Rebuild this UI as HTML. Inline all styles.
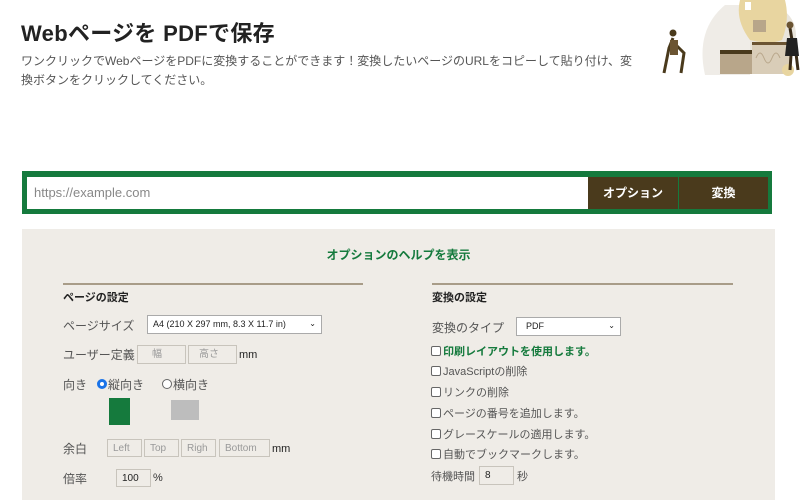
<!DOCTYPE html>
<html><head><meta charset="utf-8"><style>
*{margin:0;padding:0;box-sizing:border-box}
body{width:802px;height:500px;background:#fff;font-family:"Liberation Sans","Noto Sans CJK JP",sans-serif;position:relative;overflow:hidden;color:#333}
.a{position:absolute;white-space:nowrap}
.inp{position:absolute;border:1px solid #c8c4bc;background:#efece7;font-size:10px;color:#999;padding-left:5px;line-height:17px}
.lab{font-size:12px;color:#555}
.cb{display:inline-block;width:10px;height:10px;border:1px solid #666;border-radius:2px;background:#fff;vertical-align:-1px;margin-right:2px}
</style></head><body>
<div class="a" style="left:21px;top:16px;font-size:22px;font-weight:bold;color:#222;letter-spacing:0.3px">Webページを PDFで保存</div>
<div class="a" style="left:21px;top:52px;font-size:12px;color:#555;line-height:19px">ワンクリックでWebページをPDFに変換することができます！変換したいページのURLをコピーして貼り付け、変<br>換ボタンをクリックしてください。</div>
<svg class="a" style="left:640px;top:0" width="162" height="80">
<path d="M95 8 Q120 -2 140 8 Q160 20 155 45 Q150 75 115 74 L70 74 Q55 40 95 8Z" fill="#e9e5dc"/>
<path d="M65 75 Q55 30 85 5 L110 5 L110 75Z" fill="#efece7"/>
<path d="M100 0 L145 0 Q150 20 142 40 Q130 45 110 40 Q95 20 100 0Z" fill="#e8d5a0"/>
<rect x="105" y="2" width="6" height="8" fill="#fff"/>
<rect x="113" y="20" width="13" height="12" fill="#b8a68a"/>
<rect x="80" y="52" width="32" height="22" fill="#b8a68a"/>
<rect x="80" y="50" width="32" height="4" fill="#4a3a1c"/>
<rect x="112" y="42" width="38" height="32" fill="#d9cdb8"/>
<rect x="112" y="42" width="38" height="3" fill="#6b5432"/>
<path d="M116 58 q4 -10 8 0 t8 0 t8 0" stroke="#b8a68a" fill="none"/>
<circle cx="148" cy="70" r="6" fill="#e8d5a0"/>
<path d="M33 38 l-4 10 l-5 25 M36 45 l8 8 l-3 20" stroke="#4a3a1c" stroke-width="3" fill="none"/>
<path d="M30 40 l8 0 l0 15 l-8 0z" fill="#6b5432"/>
<circle cx="33" cy="33" r="3.5" fill="#4a3a1c"/>
<path d="M150 28 l2 12 l-2 30 M155 45 l3 25" stroke="#3a2c18" stroke-width="3" fill="none"/>
<path d="M147 38 l10 0 l2 18 l-14 0z" fill="#222"/>
<circle cx="150" cy="25" r="3.5" fill="#6b5432"/>
</svg>
<div class="a" style="left:22px;top:171px;width:750px;height:43px;background:#157a3d"></div>
<div class="a" style="left:27px;top:177px;width:561px;height:32px;background:#fff;font-size:13px;color:#888;padding:8px 7px">https://example.com</div>
<div class="a" style="left:588px;top:177px;width:90px;height:32px;background:#4a3a1c;color:#fff;font-size:12px;font-weight:bold;text-align:center;line-height:32px">オプション</div>
<div class="a" style="left:679px;top:177px;width:89px;height:32px;background:#4a3a1c;color:#fff;font-size:12px;font-weight:bold;text-align:center;line-height:32px">変換</div>
<div class="a" style="left:22px;top:229px;width:753px;height:271px;background:#efece7"></div>
<div class="a" style="left:22px;top:246px;width:753px;text-align:center;font-size:12px;font-weight:bold;color:#157a3d">オプションのヘルプを表示</div>
<div class="a" style="left:63px;top:283px;width:300px;height:2px;background:#a89c88"></div>
<div class="a" style="left:432px;top:283px;width:301px;height:2px;background:#a89c88"></div>
<div class="a" style="left:63px;top:289px;font-size:11px;font-weight:bold;color:#222">ページの設定</div>
<div class="a" style="left:432px;top:289px;font-size:11px;font-weight:bold;color:#222">変換の設定</div>
<div class="a lab" style="left:63px;top:317px">ページサイズ</div>
<div class="a" style="left:147px;top:315px;width:175px;height:19px;border:1px solid #aaa;background:#fff;font-size:9px;color:#222;padding:3px 5px">A4 (210 X 297 mm, 8.3 X 11.7 in)<span style="position:absolute;right:5px;font-size:8px">&#8964;</span></div>
<div class="a lab" style="left:63px;top:346px">ユーザー定義</div>
<div class="inp" style="left:137px;top:345px;width:49px;height:19px;padding-left:14px">幅</div>
<div class="inp" style="left:188px;top:345px;width:49px;height:19px;padding-left:10px">高さ</div>
<div class="a" style="left:239px;top:349px;font-size:11px;color:#222">mm</div>
<div class="a lab" style="left:63px;top:376px">向き</div>
<div class="a" style="left:97px;top:379px;width:10px;height:10px;border-radius:50%;border:3px solid #1a73e8;background:#fff"></div>
<div class="a lab" style="left:108px;top:376px">縦向き</div>
<div class="a" style="left:162px;top:379px;width:10px;height:10px;border-radius:50%;border:1px solid #666;background:#fff"></div>
<div class="a lab" style="left:173px;top:376px">横向き</div>
<div class="a" style="left:109px;top:398px;width:21px;height:27px;background:#157a3d"></div>
<div class="a" style="left:171px;top:400px;width:28px;height:20px;background:#bdbdbd"></div>
<div class="a lab" style="left:63px;top:440px">余白</div>
<div class="inp" style="left:107px;top:439px;width:35px;height:18px">Left</div>
<div class="inp" style="left:144px;top:439px;width:35px;height:18px">Top</div>
<div class="inp" style="left:181px;top:439px;width:35px;height:18px">Righ</div>
<div class="inp" style="left:219px;top:439px;width:51px;height:18px">Bottom</div>
<div class="a" style="left:272px;top:443px;font-size:11px;color:#222">mm</div>
<div class="a lab" style="left:63px;top:470px">倍率</div>
<div class="inp" style="left:116px;top:469px;width:35px;height:18px;color:#222">100</div>
<div class="a" style="left:153px;top:472px;font-size:11px;color:#333">%</div>
<div class="a lab" style="left:432px;top:319px">変換のタイプ</div>
<div class="a" style="left:516px;top:317px;width:105px;height:19px;border:1px solid #aaa;background:#fff;font-size:9px;color:#222;padding:3px 9px">PDF<span style="position:absolute;right:5px;font-size:8px">&#8964;</span></div>
<div class="a" style="left:431px;top:343px;font-size:11px;font-weight:bold;color:#157a3d"><span class="cb"></span>印刷レイアウトを使用します。</div>
<div class="a lab" style="left:431px;top:363px;font-size:11px"><span class="cb"></span>JavaScriptの削除</div>
<div class="a lab" style="left:431px;top:384px;font-size:11px"><span class="cb"></span>リンクの削除</div>
<div class="a lab" style="left:431px;top:405px;font-size:11px"><span class="cb"></span>ページの番号を追加します。</div>
<div class="a lab" style="left:431px;top:426px;font-size:11px"><span class="cb"></span>グレースケールの適用します。</div>
<div class="a lab" style="left:431px;top:446px;font-size:11px"><span class="cb"></span>自動でブックマークします。</div>
<div class="a lab" style="left:431px;top:468px;font-size:11px">待機時間</div>
<div class="inp" style="left:479px;top:466px;width:35px;height:19px;color:#222">8</div>
<div class="a lab" style="left:517px;top:468px;font-size:11px">秒</div>
</body></html>
